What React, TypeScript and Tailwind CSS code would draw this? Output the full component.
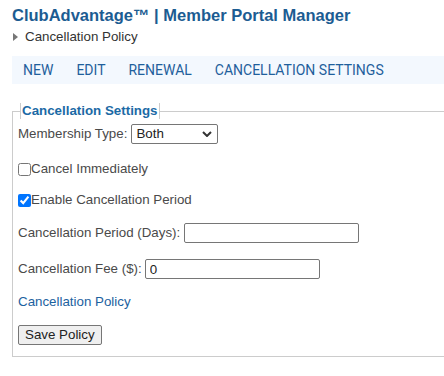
import { useState } from "react";

function App() {
  const [membershipType, setMembershipType] = useState("Both");
  const [cancelImmediately, setCancelImmediately] = useState(false);
  const [enablePeriod, setEnablePeriod] = useState(true);
  const [periodDays, setPeriodDays] = useState("");
  const [fee, setFee] = useState("0");

  const navItems = ["NEW", "EDIT", "RENEWAL", "CANCELLATION SETTINGS"];

  return (
    <main className="min-h-screen bg-white pl-3 pt-[5px] font-['Liberation_Sans',Arial,sans-serif] text-[13.33px] leading-[16px] text-[#4a4a4a]">
      <h1 className="text-[16.5px] font-bold leading-[20px] text-[#1c5c92]">
        ClubAdvantage™ | Member Portal Manager
      </h1>

      <div className="mt-[4px] flex items-center gap-[7px] text-[13.33px] leading-[16px] text-[#333]">
        <svg width="5" height="8" viewBox="0 0 5 8" className="ml-[1px]">
          <path d="M0 0 L5 4 L0 8 Z" fill="#777" />
        </svg>
        <span>Cancellation Policy</span>
      </div>

      <nav className="mt-[11px] flex h-[28px] items-center gap-[23px] bg-[#f3f8fe] pl-[11px] font-['Roboto',sans-serif] text-[14px] text-[#1f5f9c]">
        {navItems.map(item => (
          <a key={item} href="#" className="leading-[28px]">
            {item}
          </a>
        ))}
      </nav>

      <fieldset className="mt-[19px] border border-r-0 border-[#cccccc] pb-[11px] pl-[5px] pr-0 pt-0">
        <legend className="ml-[2px] border-x border-[#cccccc] px-[1px] text-[13.33px] font-bold leading-[16px] text-[#1b6aa5]">
          Cancellation Settings
        </legend>

        <div className="mt-[5px] flex items-center gap-[4px]">
          <label htmlFor="membershipType">Membership Type:</label>
          <div className="relative">
            <select
              id="membershipType"
              value={membershipType}
              onChange={event => setMembershipType(event.target.value)}
              className="block h-[20px] w-[87px] appearance-none rounded-[2px] border border-[#767676] bg-white pl-[4px] text-[13.33px] leading-[18px] text-[#222]"
            >
              <option>Both</option>
              <option>Individual</option>
              <option>Family</option>
            </select>
            <svg
              width="10"
              height="6"
              viewBox="0 0 10 6"
              className="pointer-events-none absolute right-[6px] top-[7px]"
            >
              <path d="M1 1 L5 5 L9 1" stroke="#333" strokeWidth="2" fill="none" />
            </svg>
          </div>
        </div>

        <label className="mt-[17px] flex h-[16px] items-center">
          <input
            type="checkbox"
            checked={cancelImmediately}
            onChange={event => setCancelImmediately(event.target.checked)}
            className="m-0 h-[13px] w-[13px]"
          />
          <span>Cancel Immediately</span>
        </label>

        <label className="mt-[15px] flex h-[16px] items-center">
          <input
            type="checkbox"
            checked={enablePeriod}
            onChange={event => setEnablePeriod(event.target.checked)}
            className="m-0 h-[13px] w-[13px]"
          />
          <span>Enable Cancellation Period</span>
        </label>

        <div className="mt-[15px] flex items-center gap-[4px]">
          <label htmlFor="periodDays">Cancellation Period (Days):</label>
          <input
            id="periodDays"
            type="text"
            value={periodDays}
            onChange={event => setPeriodDays(event.target.value)}
            className="block h-[20px] w-[175px] rounded-[2px] border border-[#767676] px-[4px] text-[13.33px] text-[#222]"
          />
        </div>

        <div className="mt-[16px] flex items-center gap-[3px]">
          <label htmlFor="fee">Cancellation Fee ($):</label>
          <input
            id="fee"
            type="text"
            value={fee}
            onChange={event => setFee(event.target.value)}
            className="block h-[20px] w-[175px] rounded-[2px] border border-[#767676] px-[4px] text-[13.33px] text-[#222]"
          />
        </div>

        <a href="#" className="mt-[15px] block leading-[16px] text-[#1c62a0]">
          Cancellation Policy
        </a>

        <button
          type="button"
          className="mt-[15px] block h-[20px] rounded-[2px] border border-[#767676] bg-[#efefef] px-[6px] text-[13.33px] leading-[18px] text-[#222]"
        >
          Save Policy
        </button>
      </fieldset>
    </main>
  );
}

export default App;
